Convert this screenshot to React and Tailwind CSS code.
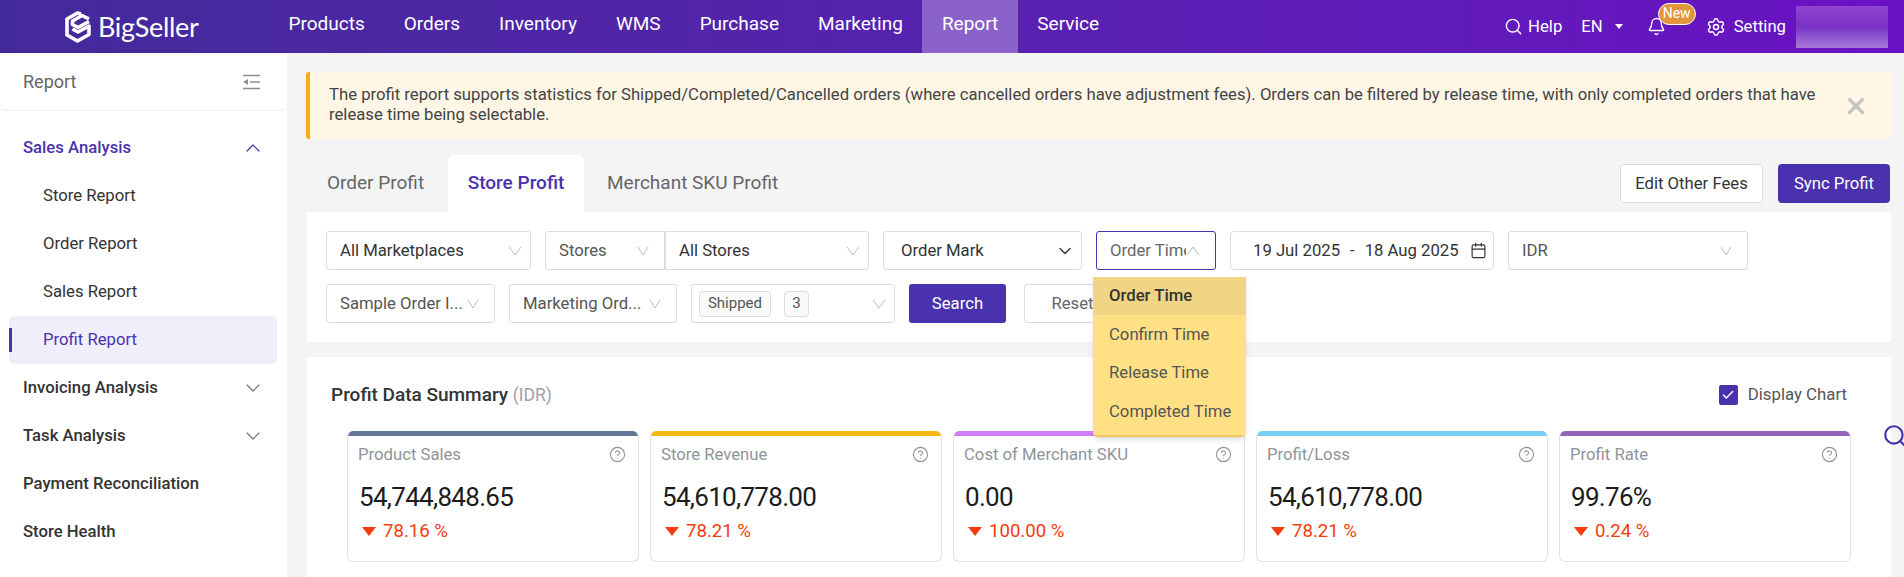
import { Search, Bell, Settings, X, ChevronUp, ChevronDown, Calendar, Check, CircleHelp } from 'lucide-react'

const NAV = ['Products', 'Orders', 'Inventory', 'WMS', 'Purchase', 'Marketing', 'Report', 'Service']

const CARDS = [
  { title: 'Product Sales', value: '54,744,848.65', change: '78.16 %', bar: 'bg-[#64779a]' },
  { title: 'Store Revenue', value: '54,610,778.00', change: '78.21 %', bar: 'bg-[#f6b913]' },
  { title: 'Cost of Merchant SKU', value: '0.00', change: '100.00 %', bar: 'bg-[#d27dfb]' },
  { title: 'Profit/Loss', value: '54,610,778.00', change: '78.21 %', bar: 'bg-[#76d0f6]' },
  { title: 'Profit Rate', value: '99.76%', change: '0.24 %', bar: 'bg-[#9564b8]' },
]

function Logo() {
  return (
    <div className="flex items-center gap-[6px] ml-[64px] w-[205px] text-white">
      <svg width="28" height="32" viewBox="0 0 28 32" fill="none" stroke="currentColor" strokeWidth="3.6" strokeLinejoin="round">
        <path d="M17 3 L13.5 2 L3 8 V24 L13.5 30 L25 23.5 V15 L14 21 L8.5 18" />
        <path d="M25 8 L18 4.5 L8.5 10 V13.5 L14 16.5 L25 10.5" />
      </svg>
      <span className="text-[27px] leading-none font-['Lato',sans-serif] tracking-[-0.3px]">BigSeller</span>
    </div>
  )
}

function Thin({ up, small, className = '' }) {
  return (
    <svg width={small ? 12 : 14} height="10" viewBox={small ? '0 0 12 10' : '0 0 14 10'} fill="none" stroke="#bdbdbd" strokeWidth="1" className={className}>
      {small
        ? <path d="M1 1 L6 9 L11 1" />
        : <path d={up ? 'M1 9 L7 1 L13 9' : 'M1 1 L7 9 L13 1'} />}
    </svg>
  )
}

function Select({ label, width, muted, small, rounded = 'rounded-[3px]' }) {
  return (
    <div className={`${width} h-[39px] bg-white border border-[#dcdcdc] ${rounded} flex items-center justify-between pl-[13px] ${small ? 'pr-[15px]' : 'pr-[8px]'} shrink-0`}>
      <span className={`truncate ${muted ? 'text-[#555]' : 'text-[#333]'}`}>{label}</span>
      <Thin small={small} className="shrink-0 ml-1" />
    </div>
  )
}

function HeaderBar() {
  return (
    <header className="h-[53px] shrink-0 flex items-center text-white bg-gradient-to-r from-[#432a9a] to-[#6a10c4]">
      <Logo />
      <nav className="flex h-full">
        {NAV.map(n => (
          <a key={n} className={`h-full flex items-center pb-[5px] px-[19.5px] text-[19px] ${n === 'Report' ? 'bg-[#8a62c9]' : ''}`}>{n}</a>
        ))}
      </nav>
      <div className="ml-auto flex items-center text-[16.7px] pr-[16px]">
        <Search size={19} strokeWidth={1.8} />
        <span className="ml-[5px]">Help</span>
        <span className="ml-[19px]">EN</span>
        <span className="ml-[12px] w-0 h-0 border-x-[4px] border-x-transparent border-t-[5px] border-t-white" />
        <div className="relative ml-[24px] mr-[40px]">
          <Bell size={19} strokeWidth={1.8} />
          <span className="absolute left-[11px] top-[-14px] h-[22px] w-[38px] rounded-full bg-[#e39539] border border-white text-[14px] leading-[19px] text-center">New</span>
        </div>
        <Settings size={20} strokeWidth={1.8} />
        <span className="ml-[8px]">Setting</span>
        <div className="ml-[10px] w-[92px] h-[42px] bg-gradient-to-b from-[#8f45cf] via-[#7a30c6] to-[#a877d8]" />
      </div>
    </header>
  )
}

function Sidebar() {
  return (
    <aside className="w-[287px] shrink-0 bg-white text-[16.7px]">
      <div className="h-[58px] flex items-center justify-between pl-[23px] pr-[27px] border-b border-[#eeeeee] rounded-b-md">
        <span className="text-[18px] text-[#666]">Report</span>
        <svg width="18" height="16" viewBox="0 0 18 16" fill="none" stroke="#8d8d95" strokeWidth="1.6">
          <path d="M1 1.5 H18 M8 8 H18 M1 14.5 H18" />
          <path d="M1 8 L6 5 V11 Z" fill="#8d8d95" stroke="none" />
        </svg>
      </div>
      <div className="pt-[13px]">
        <div className="h-[48px] flex items-center justify-between pl-[23px] pr-[22px] font-medium text-[#4a32ae]">
          <span>Sales Analysis</span>
          <ChevronUp size={24} strokeWidth={1.2} />
        </div>
        {['Store Report', 'Order Report', 'Sales Report'].map(s => (
          <div key={s} className="h-[48px] flex items-center pl-[43px] text-[#333]">{s}</div>
        ))}
        <div className="relative h-[48px] ml-[9px] mr-[10px] rounded-md bg-[#f1eefc] flex items-center pl-[34px] text-[#4a32ae]">
          <span className="absolute left-0 top-[12px] h-[24px] w-[3px] bg-[#4a32ae]" />
          Profit Report
        </div>
        {['Invoicing Analysis', 'Task Analysis', 'Payment Reconciliation', 'Store Health'].map((s, i) => (
          <div key={s} className="h-[48px] flex items-center justify-between pl-[23px] pr-[22px] font-medium text-[#333]">
            <span>{s}</span>
            {i < 2 && <ChevronDown size={24} strokeWidth={1.2} className="text-[#777]" />}
          </div>
        ))}
      </div>
    </aside>
  )
}

function Alert() {
  return (
    <div className="relative h-[67px] ml-[19px] mr-[12px] bg-[#fff6e6] border-l-[4px] border-[#faad14] rounded-[3px] pl-[19px] pt-[13px] text-[16.7px] leading-[20px] text-[#444]">
      <p className="w-[1500px]">
        The profit report supports statistics for Shipped/Completed/Cancelled orders (where cancelled orders have adjustment fees). Orders can be filtered by release time, with only completed orders that have release time being selectable.
      </p>
      <X size={26} strokeWidth={3} className="absolute right-[23px] top-[21px] text-[#c4c4c4]" />
    </div>
  )
}

function Tabs() {
  return (
    <div className="h-[57px] mt-[16px] ml-[20px] mr-[14px] flex items-end justify-between">
      <div className="flex text-[19px] h-[57px]">
        <div className="w-[141px] flex items-center pl-[20px] text-[#666]">Order Profit</div>
        <div className="w-[136px] flex items-center justify-center bg-white rounded-t-md font-medium text-[#4a32ae]">Store Profit</div>
        <div className="flex items-center pl-[23px] text-[#666]">Merchant SKU Profit</div>
      </div>
      <div className="flex gap-[15px] self-start mt-[9px] text-[16.7px]">
        <button className="w-[143px] h-[39px] bg-white border border-[#dcdcdc] rounded-[4px] text-[#333]">Edit Other Fees</button>
        <button className="w-[112px] h-[39px] bg-[#4a32ae] rounded-[4px] text-white">Sync Profit</button>
      </div>
    </div>
  )
}

function Filters() {
  return (
    <section className="relative h-[130px] ml-[20px] mr-[13px] bg-white pl-[19px] pt-[19px] text-[16.7px]">
      <div className="flex gap-[14px]">
        <Select label="All Marketplaces" width="w-[205px]" />
        <div className="flex">
          <Select label="Stores" width="w-[120px]" muted small rounded="rounded-l-[3px]" />
          <Select label="All Stores" width="w-[204px]" rounded="rounded-r-[3px]" />
        </div>
        <div className="w-[199px] h-[39px] border border-[#dcdcdc] rounded-[3px] flex items-center justify-between pl-[17px] pr-[6px] text-[#333]">
          Order Mark
          <ChevronDown size={20} strokeWidth={1.6} />
        </div>
        <div className="w-[120px] h-[39px] border border-[#4a32ae] rounded-[3px] flex items-center pl-[13px] pr-[9px] text-[#666]">
          <span className="w-[76px] overflow-hidden whitespace-nowrap">Order Time</span>
          <Thin up />
        </div>
        <div className="w-[264px] h-[39px] border border-[#dcdcdc] rounded-[4px] flex items-center pl-[22px] pr-[6px] text-[#333]">
          <span>19 Jul 2025</span>
          <span className="mx-[10px]">-</span>
          <span>18 Aug 2025</span>
          <Calendar size={17} strokeWidth={1.6} className="ml-auto" />
        </div>
        <Select label="IDR" width="w-[240px]" muted small />
      </div>
      <div className="flex gap-[14px] mt-[14px]">
        <Select label="Sample Order I..." width="w-[169px]" muted small />
        <Select label="Marketing Ord..." width="w-[168px]" muted small />
        <div className="w-[204px] h-[39px] border border-[#dcdcdc] rounded-[3px] flex items-center pl-[7px] pr-[8px] text-[15px] text-[#555]">
          <span className="h-[26px] w-[72px] flex items-center justify-center rounded-[4px] bg-[#fafafa] border border-[#dcdcdc]">Shipped</span>
          <span className="ml-[13px] h-[26px] w-[25px] flex items-center justify-center rounded-[4px] bg-[#fafafa] border border-[#dcdcdc]">3</span>
          <Thin className="ml-auto" />
        </div>
        <button className="w-[97px] h-[39px] bg-[#4a32ae] text-white rounded-[3px]">Search</button>
        <button className="w-[97px] h-[39px] ml-[4px] bg-white border border-[#dcdcdc] rounded-[3px] text-[#666]">Reset</button>
      </div>
      {/* open time type menu */}
      <div className="absolute left-[786px] top-[60px] z-10 w-[153px] h-[165px] pt-[5px] bg-white rounded-[5px] shadow-md overflow-hidden">
        <div className="h-full bg-[#ffe084] border-b-2 border-[#ecc464] text-[#555]">
          <div className="h-[38px] flex items-center pl-[16px] bg-[#f0d584] font-medium text-[#333]">Order Time</div>
          {['Confirm Time', 'Release Time', 'Completed Time'].map(t => (
            <div key={t} className="h-[38.5px] flex items-center pl-[16px]">{t}</div>
          ))}
        </div>
      </div>
    </section>
  )
}

function StatCard({ card }) {
  return (
    <div className="w-[292px] h-[131px] shrink-0 rounded-md overflow-hidden bg-white border border-[#e2e2e2] border-t-0">
      <div className={`h-[5px] ${card.bar}`} />
      <div className="flex items-center justify-between pl-[10px] pr-[12px] mt-[6px] text-[16.7px] text-[#909399]">
        <span>{card.title}</span>
        <CircleHelp size={17} strokeWidth={1.6} />
      </div>
      <div className="pl-[11px] mt-[14px] text-[26px] tracking-[-0.7px] leading-[32px] text-[#1c1c1c]">{card.value}</div>
      <div className="pl-[14px] mt-[7px] flex items-center text-[18.6px] leading-[22px] text-[#f53c0c]">
        <span className="w-0 h-0 border-x-[7px] border-x-transparent border-t-[9px] border-t-[#f53c0c] mr-[7px]" />
        {card.change}
      </div>
    </div>
  )
}

function Summary() {
  return (
    <section className="flex-1 mt-[15px] ml-[20px] mr-[13px] bg-white">
      <div className="flex items-center justify-between h-[74px] pt-[2px] pl-[24px] pr-[44px]">
        <div className="text-[19px] font-medium text-[#333]">
          Profit Data Summary <span className="text-[17.5px] font-normal text-[#a0a0a8]">(IDR)</span>
        </div>
        <label className="flex items-center gap-[10px] text-[16.8px] text-[#555]">
          <span className="w-[19px] h-[20px] rounded-[2px] bg-[#4a32ae] flex items-center justify-center text-white">
            <Check size={14} strokeWidth={2.5} />
          </span>
          Display Chart
        </label>
      </div>
      <div className="flex gap-[11px] pl-[40px]">
        {CARDS.map(c => <StatCard key={c.title} card={c} />)}
      </div>
    </section>
  )
}

export default function App() {
  return (
    <div className="relative w-[1904px] h-[577px] overflow-hidden flex flex-col bg-[#f4f4f4] font-['Roboto',sans-serif]">
      <HeaderBar />
      <div className="flex flex-1 min-h-0">
        <Sidebar />
        <main className="flex-1 min-w-0 flex flex-col pt-[19px]">
          <Alert />
          <Tabs />
          <Filters />
          <Summary />
        </main>
      </div>
      {/* floating search button, cut off by the window edge */}
      <Search size={26} strokeWidth={2} className="absolute left-[1882px] top-[423px] text-[#4a32ae]" />
    </div>
  )
}
